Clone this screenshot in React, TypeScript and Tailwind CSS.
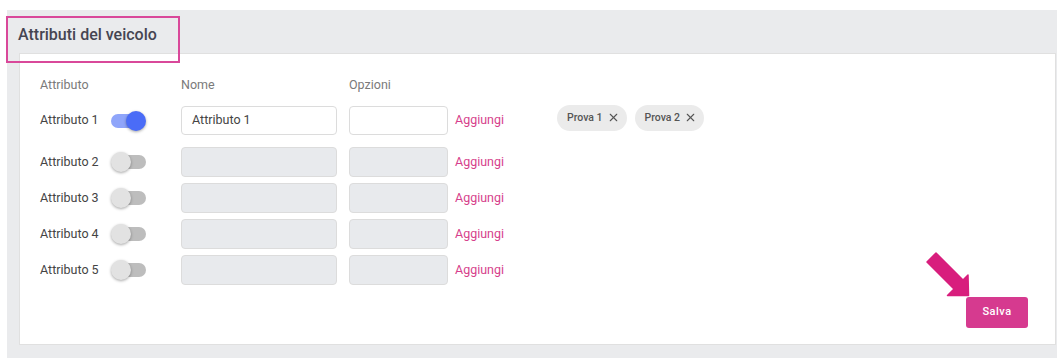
import { X } from "lucide-react";

const rows = [
  { label: "Attributo 1", on: true, name: "Attributo 1" },
  { label: "Attributo 2", on: false, name: "" },
  { label: "Attributo 3", on: false, name: "" },
  { label: "Attributo 4", on: false, name: "" },
  { label: "Attributo 5", on: false, name: "" },
];

function Toggle({ on }: { on: boolean }) {
  return (
    <div className="relative w-[36px] h-[22px] shrink-0">
      <div
        className={
          on
            ? "absolute left-0 right-[4px] top-[4px] h-[14px] rounded-full bg-[#8fa5fa]"
            : "absolute left-[4px] right-[1px] top-[4px] h-[14px] rounded-full bg-[#bdbdbd]"
        }
      />
      <div
        className={
          on
            ? "absolute left-[15px] top-[1px] w-[20px] h-[20px] rounded-full bg-[#4a6cf7] shadow-[0_1px_3px_rgba(0,0,0,0.35)]"
            : "absolute left-0 top-[1px] w-[20px] h-[20px] rounded-full bg-[#e2e2e2] shadow-[0_1px_3px_rgba(0,0,0,0.35)]"
        }
      />
    </div>
  );
}

function Chip({ text }: { text: string }) {
  return (
    <span className="flex items-center gap-[4px] h-[26px] pl-[10px] pr-[7px] rounded-full bg-[#ebebeb] text-[10.5px] font-medium text-[#555]">
      {text}
      <X size={13} strokeWidth={2} className="text-[#555]" />
    </span>
  );
}

export default function App() {
  return (
    <div className="relative w-[1057px] h-[358px] bg-white overflow-hidden font-['Roboto',sans-serif]">
      <div className="ml-[7px] mt-[10px] bg-[#eaebed] pb-[13px] pr-[1px]">
        <div className="h-[43px] flex items-end pl-[11px] pb-[8px]">
          <h2 className="text-[16px] leading-[20px] font-medium text-[#454552]">Attributi del veicolo</h2>
        </div>

        <div className="ml-[12px] bg-white border border-[#e0e0e0] pl-[20px] pr-[27px] pt-[21px] pb-[16px]">
          <div className="flex text-[12.5px] leading-[20px] text-[#7a7a7a] mb-[11px]">
            <span className="w-[141px]">Attributo</span>
            <span className="w-[168px]">Nome</span>
            <span>Opzioni</span>
          </div>

          <div className="flex flex-col gap-[6px]">
            {rows.map((r, i) => (
              <div key={r.label} className={i === 1 ? "flex items-center mt-[6px]" : "flex items-center"}>
                <span className="w-[71px] text-[12.5px] text-[#444]">{r.label}</span>
                <Toggle on={r.on} />
                <div
                  className={
                    r.on
                      ? "ml-[34px] w-[156px] h-[29px] rounded-[4px] border border-[#dcdcdc] bg-white px-[10px] flex items-center text-[12.5px] text-[#444]"
                      : "ml-[34px] w-[156px] h-[30px] rounded-[4px] border border-[#dcdcdc] bg-[#e8eaed]"
                  }
                >
                  {r.name}
                </div>
                <div
                  className={
                    r.on
                      ? "ml-[12px] w-[99px] h-[29px] rounded-[4px] border border-[#dcdcdc] bg-white"
                      : "ml-[12px] w-[99px] h-[30px] rounded-[4px] border border-[#dcdcdc] bg-[#e8eaed]"
                  }
                />
                <span className="ml-[7px] w-[102px] text-[12.5px] text-[#d63f8c]">Aggiungi</span>
                {r.on && (
                  <div className="-mt-[6px] flex gap-[8px]">
                    <Chip text="Prova 1" />
                    <Chip text="Prova 2" />
                  </div>
                )}
              </div>
            ))}
          </div>

          <div className="flex justify-end mt-[12px]">
            <button className="w-[62px] h-[31px] rounded-[3px] bg-[#d63a8f] text-white text-[11px] font-medium tracking-[0.5px]">
              Salva
            </button>
          </div>
        </div>
      </div>

      <div className="absolute left-[6px] top-[16px] w-[174px] h-[47px] border-2 border-[#d9489a]" />

      <svg className="absolute left-[920px] top-[250px]" width="52" height="50" viewBox="0 0 52 50">
        <polygon
          points="7,12 16,3 43,30 48,25 48.5,45.5 27.5,45.5 34,39"
          fill="#d81e7d"
          stroke="#d81e7d"
          strokeWidth="1.5"
          strokeLinejoin="round"
        />
      </svg>
    </div>
  );
}
